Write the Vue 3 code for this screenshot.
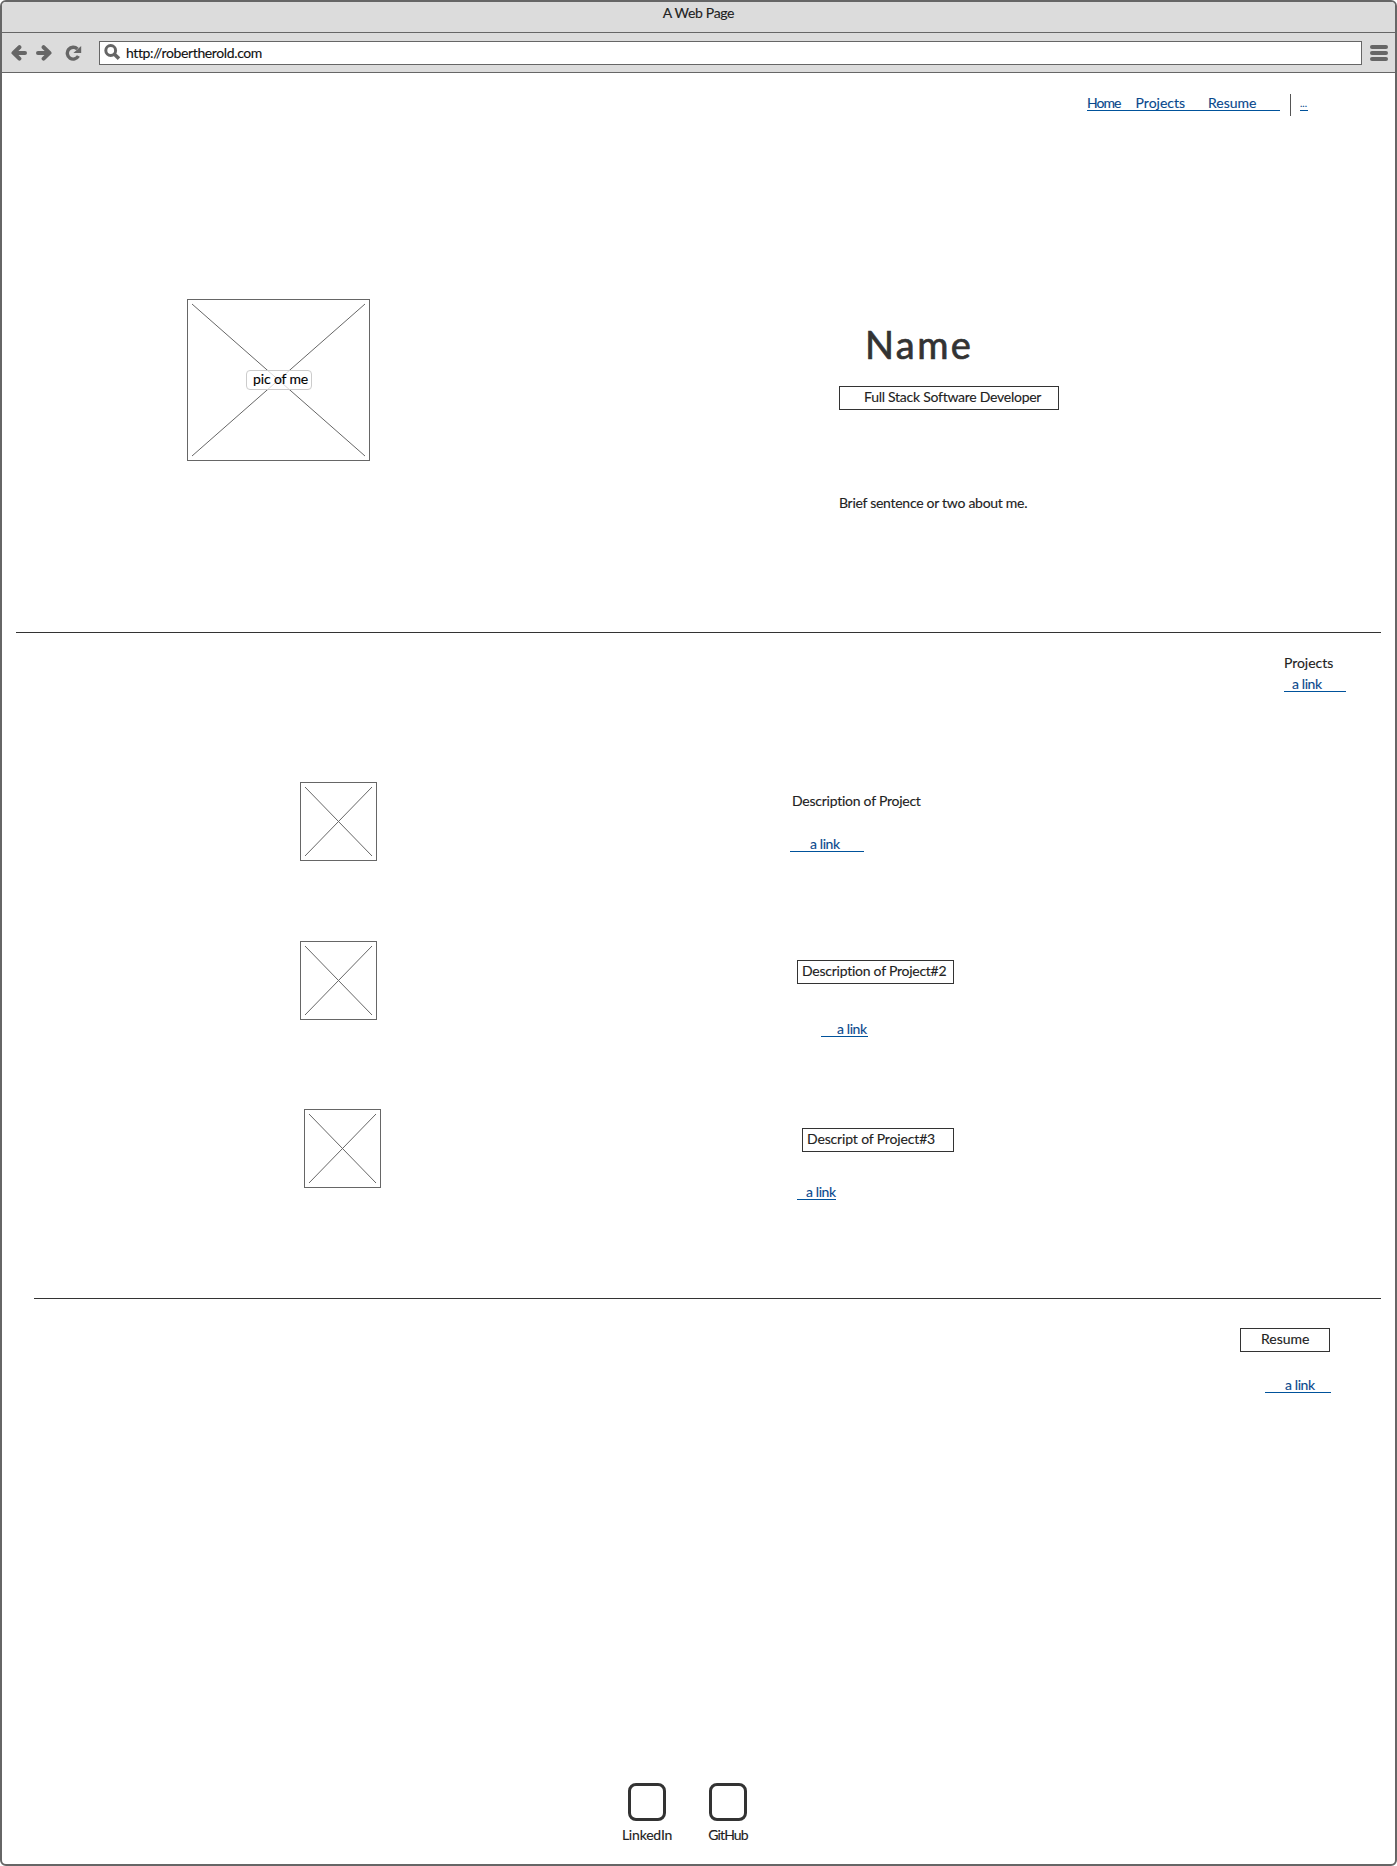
<script setup>
const projects = [
  { id: 1, text: 'Description of Project' },
  { id: 2, text: 'Description of Project#2' },
  { id: 3, text: 'Descript of Project#3' }
]
const socials = ['LinkedIn', 'GitHub']
</script>

<template>
  <div class="browser">
    <header class="titlebar"><span>A Web Page</span></header>
    <div class="toolbar">
      <svg class="arrow" width="16" height="16" viewBox="0 0 16 16">
        <path d="M8.4 2.2 L2.5 7.9 L8.4 13.6 M3 7.9 H14" />
      </svg>
      <svg class="arrow forward" width="16" height="16" viewBox="0 0 16 16">
        <path d="M7.6 2.2 L13.5 7.9 L7.6 13.6 M13 7.9 H2" />
      </svg>
      <svg class="reload" width="17" height="16" viewBox="0 0 17 16">
        <path class="ring" d="M12.4 4 A5.9 5.9 0 1 0 13.4 11" />
        <path class="tip" d="M16.2 1 V7.9 H8.4 Z" />
      </svg>
      <div class="address">
        <svg width="17" height="17" viewBox="0 0 17 17">
          <circle cx="6.7" cy="6.5" r="4.9" />
          <path d="M10.4 10.2 L15 14.6" />
        </svg>
        <span>http://robertherold.com</span>
      </div>
      <div class="menu"><i></i><i></i><i></i></div>
    </div>

    <main>
      <nav>
        <div class="links">
          <a class="home">Home</a><a class="work">Projects</a><a class="cv">Resume</a>
        </div>
        <a class="more">...</a>
      </nav>

      <section class="hero">
        <div class="photo">
          <svg width="183" height="162" viewBox="0 0 183 162">
            <rect x=".5" y=".5" width="182" height="161" />
            <path d="M5 5 L178 157 M178 5 L5 157" />
          </svg>
          <span class="caption">pic of me</span>
        </div>
        <div class="intro">
          <h1>Name</h1>
          <p class="boxed role"><span>Full Stack Software Developer</span></p>
          <p class="brief">Brief sentence or two about me.</p>
        </div>
      </section>

      <hr class="rule" />

      <section class="projects">
        <div class="heading">
          <p>Projects</p>
          <a>a link</a>
        </div>
        <article v-for="p in projects" :key="p.id" :class="'project p' + p.id">
          <svg width="77" height="79" viewBox="0 0 77 79">
            <rect x=".5" y=".5" width="76" height="78" />
            <path d="M5 5 L72 74 M72 5 L5 74" />
          </svg>
          <div class="about">
            <p :class="{ boxed: p.id > 1 }"><span>{{ p.text }}</span></p>
            <a>a link</a>
          </div>
        </article>
      </section>

      <hr class="rule second" />

      <section class="resume">
        <p class="boxed"><span>Resume</span></p>
        <a>a link</a>
      </section>

      <footer>
        <div v-for="s in socials" :key="s" class="social" :class="s.toLowerCase()">
          <i></i>
          <span>{{ s }}</span>
        </div>
      </footer>
    </main>
  </div>
</template>

<style>
body { margin: 0; background: #fff; }
</style>

<style scoped>
* { box-sizing: border-box; }
.browser {
  width: 1397px; height: 1866px;
  display: flex; flex-direction: column;
  border: 2px solid #666; border-radius: 6px; overflow: hidden;
  font: 14px/20px Lato, "Open Sans", sans-serif; color: #222;
  -webkit-text-stroke: .12px currentColor;
  background: #fff; white-space: nowrap;
}
p, h1 { margin: 0; font-weight: 400; }
svg { display: block; flex: none; fill: none; stroke: #666; }
.titlebar {
  height: 31px; padding-top: 1px; text-align: center; letter-spacing: -.33px;
  background: #dcdcdc; border-bottom: 1px solid #666;
}
.toolbar {
  height: 40px; display: flex; align-items: center;
  padding: 0 7px 0 9px; background: #dcdcdc; border-bottom: 1px solid #666;
}
.arrow { stroke-width: 4; stroke-linecap: round; stroke-linejoin: round; }
.forward { margin-left: 9px; }
.reload { margin-left: 13px; }
.reload .ring { stroke-width: 3.4; }
.reload .tip { fill: #666; stroke: none; }
.address {
  width: 1263px; height: 24px; margin: 0 8px 0 17px; padding-left: 4px;
  display: flex; align-items: center; background: #fff; border: 1px solid #666; color: #111;
}
.address svg { stroke-width: 3; }
.address path { stroke-width: 3.6; }
.address span { margin-left: 5px; letter-spacing: -.38px; }
.menu { width: 18px; display: flex; flex-direction: column; gap: 2px; margin-top: 1px; }
.menu i { height: 4px; border-radius: 2px; background: #666; }

main { flex: 1; display: flex; flex-direction: column; }
a { display: block; height: 18px; color: #08488c; border-bottom: 1px solid #00529b; letter-spacing: -.4px; }
nav { display: flex; height: 22px; margin: 21px 0 0 1085px; }
.links { display: flex; width: 204px; height: 22px; padding-right: 10px; border-right: 1px solid #555; }
.links a { height: 17px; line-height: 18px; letter-spacing: 0; }
.links .home { width: 49px; letter-spacing: -1px; }
.work { width: 73px; }
.cv { width: 72px; flex: none; }
.more { width: 8px; height: 17px; margin-left: 9px; line-height: 18px; font-size: 10px; letter-spacing: 0; }

.hero { display: flex; height: 516px; }
.photo { position: relative; margin: 183px 0 0 185px; width: 183px; height: 162px; }
.caption {
  position: absolute; left: 59px; top: 71px; width: 66px; height: 20px;
  padding-left: 6px; line-height: 16px; border: 1px solid #ccc; border-radius: 4px;
  background: rgba(255, 255, 255, .75); color: #000; letter-spacing: -.15px;
}
.intro { margin: 205px 0 0 469px; }
h1 { padding-left: 26px; height: 65px; font-size: 38px; line-height: 46px; letter-spacing: 2.4px; color: #333; -webkit-text-stroke-width: .7px; }
.boxed { height: 24px; border: 1px solid #333; line-height: 20px; }
.role { width: 220px; padding-left: 24px; letter-spacing: -.26px; }
.brief { margin-top: 83px; letter-spacing: -.28px; }
.rule { width: 1365px; height: 1px; margin: 0 0 0 14px; border: 0; background: #333; flex: none; }
.second { width: 1347px; margin-left: 32px; }

.projects { height: 665px; display: flex; flex-direction: column; }
.heading { margin: 20px 0 0 1282px; height: 129px; }
.heading p { letter-spacing: -.05px; }
.heading a { width: 62px; padding-left: 8px; margin-top: 1px; }
.project { display: flex; margin-left: 298px; height: 159px; }
.about { margin: 9px 0 0 413px; }
.about p { letter-spacing: -.25px; }
.about a { width: 74px; padding-left: 20px; margin: 23px 0 0; }
.p1 .about p { padding-left: 2px; }
.p2 { height: 168px; }
.p2 .about { margin: 19px 0 0 420px; }
.p2 .about p { width: 157px; padding-left: 4px; }
.p2 .about a { width: 47px; margin: 35px 0 0 24px; padding-left: 16px; }
.p3 { height: 180px; margin-left: 302px; }
.p3 .about { margin: 19px 0 0 416px; }
.p3 .about p { width: 152px; margin-left: 5px; padding-left: 4px; letter-spacing: -.15px; }
.p3 .about a { width: 39px; margin-top: 30px; padding-left: 9px; }

.resume { margin: 29px 0 0 1238px; height: 72px; }
.resume .boxed { width: 90px; padding-left: 20px; }
.resume a { width: 66px; margin: 23px 0 0 25px; padding-left: 20px; }
footer { display: flex; gap: 23px; margin: auto 0 19px 616px; height: 62px; }
.social { width: 58px; display: flex; flex-direction: column; align-items: center; }
.social i { width: 38px; height: 38px; border: 3px solid #333; border-radius: 8px; }
.social span { margin-top: 4px; letter-spacing: -.2px; }
.github span { letter-spacing: -.85px; }
</style>
